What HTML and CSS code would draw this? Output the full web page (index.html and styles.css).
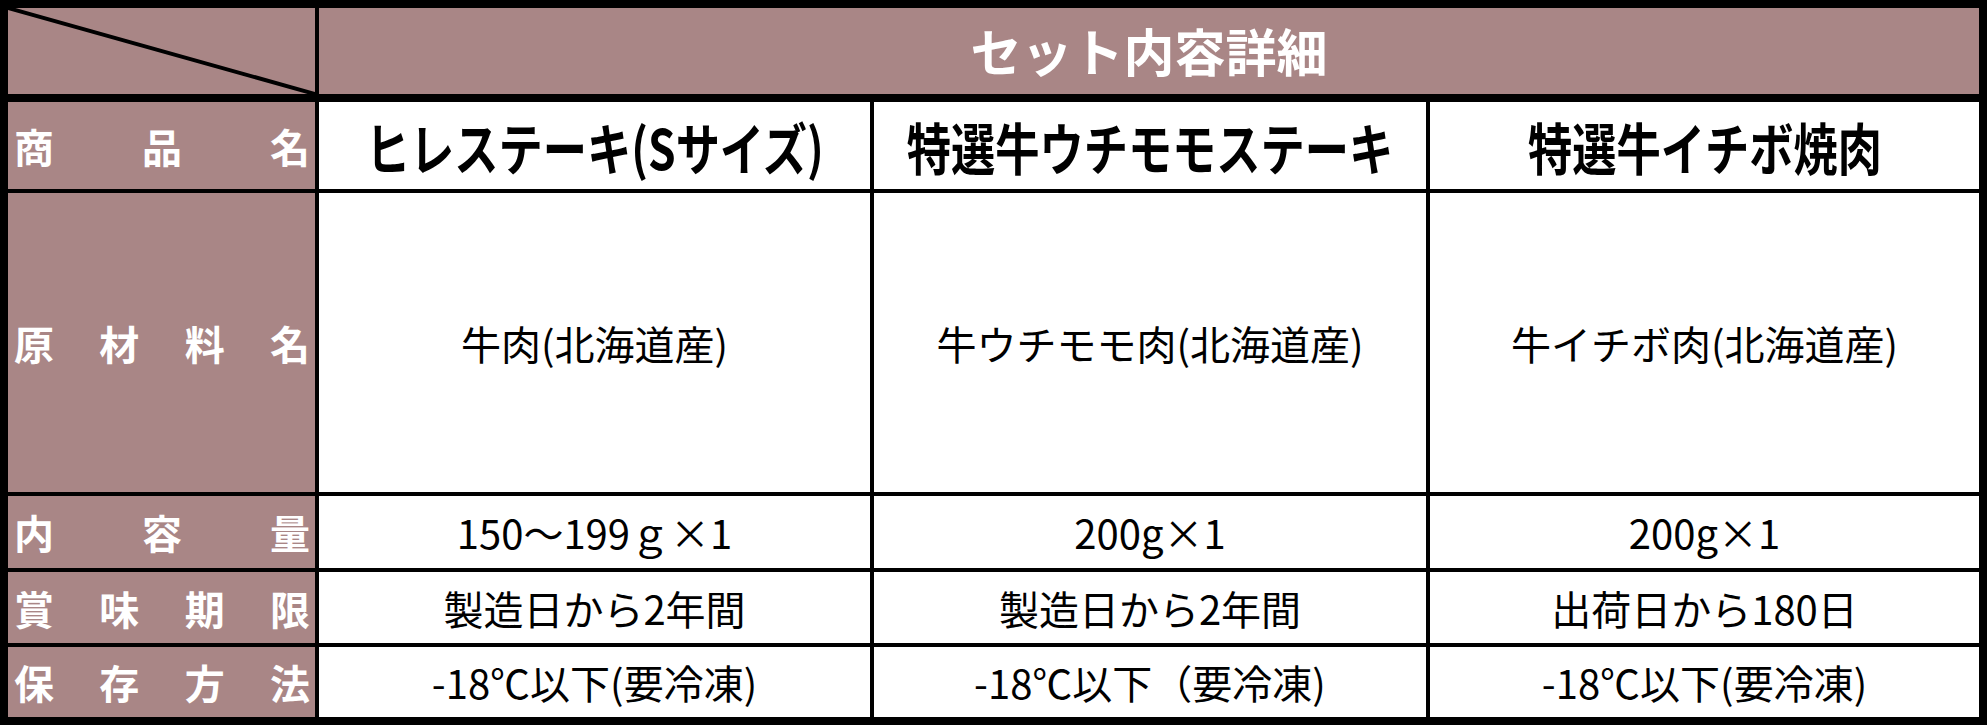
FILE: index.html
```html
<!DOCTYPE html>
<html lang="ja">
<head>
<meta charset="utf-8">
<title>セット内容詳細</title>
<link rel="stylesheet" href="styles.css">
</head>
<body>
<div class="table">
  <div class="cell corner head">
    <svg class="diag" viewBox="0 0 100 100" preserveAspectRatio="none"><line x1="0" y1="0" x2="100" y2="100" stroke="#000" stroke-width="4" vector-effect="non-scaling-stroke"/></svg>
  </div>
  <div class="cell title head">セット内容詳細</div>

  <div class="cell label"><span>商</span><span>品</span><span>名</span></div>
  <div class="cell name"><span class="cond">ヒレステーキ(Sサイズ)</span></div>
  <div class="cell name"><span class="cond">特選牛ウチモモステーキ</span></div>
  <div class="cell name"><span class="cond">特選牛イチボ焼肉</span></div>

  <div class="cell label"><span>原</span><span>材</span><span>料</span><span>名</span></div>
  <div class="cell data">牛肉(北海道産)</div>
  <div class="cell data">牛ウチモモ肉(北海道産)</div>
  <div class="cell data">牛イチボ肉(北海道産)</div>

  <div class="cell label"><span>内</span><span>容</span><span>量</span></div>
  <div class="cell data">150～199ｇ×1</div>
  <div class="cell data">200g×1</div>
  <div class="cell data">200g×1</div>

  <div class="cell label"><span>賞</span><span>味</span><span>期</span><span>限</span></div>
  <div class="cell data">製造日から2年間</div>
  <div class="cell data">製造日から2年間</div>
  <div class="cell data">出荷日から180日</div>

  <div class="cell label"><span>保</span><span>存</span><span>方</span><span>法</span></div>
  <div class="cell data">-18℃以下(要冷凍)</div>
  <div class="cell data">-18℃以下（要冷凍)</div>
  <div class="cell data">-18℃以下(要冷凍)</div>
</div>
</body>
</html>
```
FILE: styles.css
```css
html, body {
  margin: 0;
  padding: 0;
  background: #fff;
}

.table {
  box-sizing: border-box;
  width: 1987px;
  height: 725px;
  background: #000;
  padding: 8px;
  display: grid;
  grid-template-columns: 307px 551px 552px 549px;
  grid-template-rows: 90px 87px 299px 72px 71px 70px;
  column-gap: 4px;
  row-gap: 4px;
  font-family: "Noto Sans CJK JP", "Noto Sans", sans-serif;
}

.cell {
  display: flex;
  align-items: center;
  justify-content: center;
  background: #fff;
  color: #000;
  overflow: hidden;
}

.head {
  background: #a98686;
  border-bottom: 4px solid #000;
}

.corner {
  padding: 0;
}

.diag {
  display: block;
  width: 100%;
  height: 100%;
}

.title {
  grid-column: 2 / 5;
  color: #fff;
  font-weight: 700;
  font-size: 51px;
  line-height: 1;
  padding-bottom: 2px;
}

.label {
  background: #a98686;
  color: #fff;
  font-weight: 700;
  font-size: 40px;
  line-height: 1;
  justify-content: space-between;
  padding: 0 5px 0 6px;
}

.name {
  font-weight: 700;
  font-size: 56px;
  line-height: 1;
}

.cond {
  display: inline-block;
  white-space: nowrap;
  transform: scaleX(0.79);
}

.data {
  font-size: 40px;
  line-height: 1;
  white-space: nowrap;
}
```
